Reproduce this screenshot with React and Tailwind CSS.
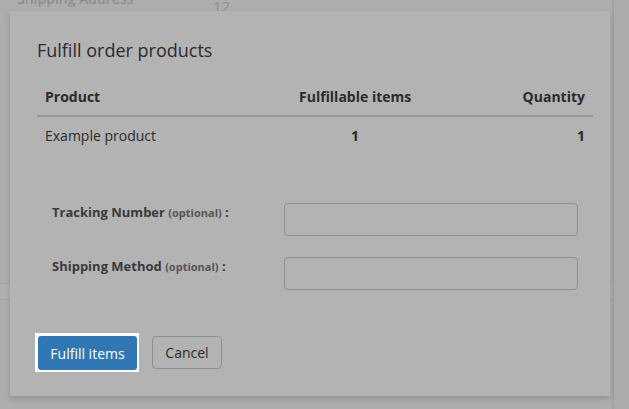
export default function App() {
  const font = { fontFamily: '"Open Sans", "Noto Sans", sans-serif' };
  return (
    <div className="relative w-[629px] h-[409px] overflow-hidden bg-[#adadad] text-[#2b2b2b]" style={font}>
      {/* background page */}
      <div className="flex h-full">
        <div className="w-[612px] h-full flex flex-col">
          <div className="flex items-start h-[14px] text-[14px] leading-[14px] text-[#8e8e8e]">
            <span className="ml-[17px] w-[196px] -mt-[8px] font-semibold">Shipping Address</span>
            <span className="-mt-[1px] text-[15px]">12</span>
          </div>
          <div className="mt-[269px] h-[17px] border-y border-[#a3a3a3] bg-[#b0b0b0]"></div>
        </div>
        <div className="w-[17px] h-full border-l-2 border-[#a2a2a2] bg-[#aaabad]"></div>
      </div>

      {/* modal */}
      <div className="absolute left-[10px] top-[11px] w-[600px] h-[385px] bg-[#b3b3b3] shadow-[0_3px_6px_rgba(0,0,0,0.15)] flex flex-col px-[27px]">
        <h4 className="mt-[29px] text-[18px] leading-[20px] text-[#2b2b2b]">Fulfill order products</h4>
        <table className="mt-[19px] w-[556px] text-[14px] leading-[20px] border-collapse">
          <thead>
            <tr className="border-b-2 border-[#999999]">
              <th className="text-left font-bold px-[8px] py-[8px]">Product</th>
              <th className="text-center font-bold pl-[6px] pr-[10px] py-[8px] w-[200px]">Fulfillable items</th>
              <th className="text-right font-bold px-[8px] py-[8px]">Quantity</th>
            </tr>
          </thead>
          <tbody>
            <tr>
              <td className="text-left px-[8px] pt-[9px] pb-[6px]">Example product</td>
              <td className="text-center font-bold pl-[6px] pr-[10px] pt-[9px] pb-[6px]">1</td>
              <td className="text-right font-bold px-[8px] pt-[9px] pb-[6px]">1</td>
            </tr>
          </tbody>
        </table>

        <div className="mt-[51px] flex flex-col gap-[21px]">
          <div className="flex items-start">
            <label className="ml-[15px] w-[232px] text-[13px] leading-[19px] font-bold text-[#3a3a3a]">
              Tracking Number <span className="text-[11px] text-[#555]">(optional)</span> :
            </label>
            <div className="w-[294px] h-[33px] rounded-[4px] border border-[#8f8f8f] bg-[#b3b3b3]"></div>
          </div>
          <div className="flex items-start">
            <label className="ml-[15px] w-[232px] text-[13px] leading-[19px] font-bold text-[#3a3a3a]">
              Shipping Method <span className="text-[11px] text-[#555]">(optional)</span> :
            </label>
            <div className="w-[294px] h-[33px] rounded-[4px] border border-[#8f8f8f] bg-[#b3b3b3]"></div>
          </div>
        </div>

        <div className="mt-[43px] flex items-center gap-[13px] -ml-[2px]">
          <div className="bg-white pl-[3px] pr-[2px] pt-[3px] pb-[2px]">
            <button className="block h-[34px] w-[99px] rounded-[3px] bg-[#2f77b5] text-white text-[14px]">
              Fulfill items
            </button>
          </div>
          <button className="h-[33px] w-[70px] rounded-[4px] border border-[#8f8f8f] text-[14px] text-[#2b2b2b]">
            Cancel
          </button>
        </div>
      </div>
    </div>
  );
}
